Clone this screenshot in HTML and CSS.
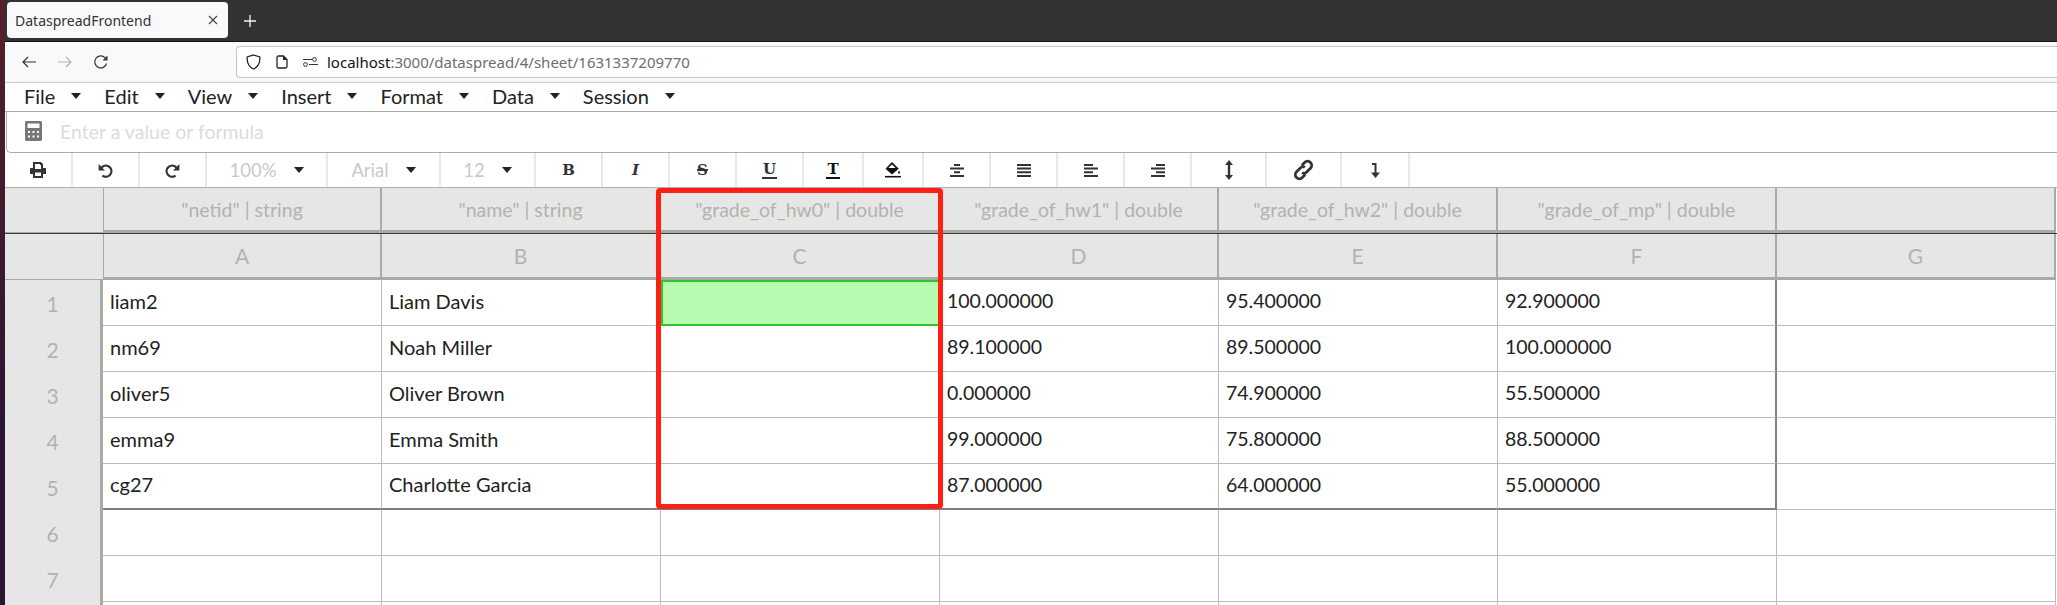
FILE: index.html
```html
<!DOCTYPE html>
<html lang="en">
<head>
    <meta charset="utf-8">
    <title>DataspreadFrontend</title>
    <link rel="stylesheet" href="styles.css">
</head>
<body>
<div class="desktop-edge"></div>
<div class="browser">
    <div class="tabbar">
        <div class="tab">
            <span class="tab-title">DataspreadFrontend</span>
            <svg class="tab-close" width="10" height="10" viewBox="0 0 10 10"><path d="M1 1L9 9M9 1L1 9" stroke="#444" stroke-width="1.1"/></svg>
        </div>
        <svg class="tab-new" width="12" height="12" viewBox="0 0 12 12"><path d="M6 0V12M0 6H12" stroke="#f4f4f4" stroke-width="1.3"/></svg>
    </div>

    <div class="navbar">
        <div class="nav-buttons">
            <svg width="16" height="14" viewBox="0 0 16 14"><path d="M15 7H2M7 2L2 7L7 12" fill="none" stroke="#333" stroke-width="1.2"/></svg>
            <svg width="16" height="14" viewBox="0 0 16 14"><path d="M1 7H14M9 2L14 7L9 12" fill="none" stroke="#b3b3b3" stroke-width="1.2"/></svg>
            <svg width="16" height="16" viewBox="0 0 16 16"><path d="M13.6 9.5A6 6 0 1 1 12 3.6L14 5.6" fill="none" stroke="#333" stroke-width="1.2"/><path d="M14.5 1.5V6.5H9.5Z" fill="#333"/></svg>
        </div>
        <div class="urlbar">
            <svg class="url-shield" width="15" height="16" viewBox="0 0 15 16"><path d="M7.5 1L13.8 3C14.2 8.5 12 13 7.5 15C3 13 .8 8.5 1.2 3Z" fill="none" stroke="#222" stroke-width="1.3"/></svg>
            <svg class="url-doc" width="12" height="14" viewBox="0 0 12 14"><path d="M2.5 1H7.5L11 4.5V11.5C11 12.4 10.4 13 9.5 13H2.5C1.6 13 1 12.4 1 11.5V2.5C1 1.6 1.6 1 2.5 1Z" fill="none" stroke="#222" stroke-width="1.3"/><path d="M7 1V5H11Z" fill="#222"/></svg>
            <svg class="url-perm" width="15" height="10" viewBox="0 0 15 10"><path d="M0 2.5H9M6 7.5H15" stroke="#333" stroke-width="1"/><circle cx="11.5" cy="2.5" r="1.9" fill="#f9f9fb" stroke="#333"/><circle cx="2.5" cy="7.5" r="1.9" fill="#f9f9fb" stroke="#333"/></svg>
            <span class="url-text"><span class="url-host">localhost</span>:3000/dataspread/4/sheet/1631337209770</span>
        </div>
    </div>

    <div class="menubar">
        <div class="menu-item">File<i class="caret"></i></div>
        <div class="menu-item">Edit<i class="caret"></i></div>
        <div class="menu-item">View<i class="caret"></i></div>
        <div class="menu-item">Insert<i class="caret"></i></div>
        <div class="menu-item">Format<i class="caret"></i></div>
        <div class="menu-item">Data<i class="caret"></i></div>
        <div class="menu-item">Session<i class="caret"></i></div>
    </div>

    <div class="formula">
        <svg width="17" height="20" viewBox="0 0 17 20"><path fill-rule="evenodd" fill="#777" d="M1.5 0H15.5C16.3 0 17 .7 17 1.5V18.5C17 19.3 16.3 20 15.5 20H1.5C.7 20 0 19.3 0 18.5V1.5C0 .7 .7 0 1.5 0ZM2.5 2.5V7H14.5V2.5ZM3 10V12H5V10ZM7.5 10V12H9.5V10ZM12 10V12H14V10ZM3 14.5V16.5H5V14.5ZM7.5 14.5V16.5H9.5V14.5ZM12 14.5V16.5H14V14.5Z"/></svg>
        <span class="formula-hint">Enter a value or formula</span>
    </div>

    <div class="toolbar">
        <div class="tb first"><svg width="16" height="16" viewBox="0 0 16 16"><path fill="#333" d="M3 0H11L13 2V6H15C15.6 6 16 6.4 16 7V12H13V16H3V12H0V7C0 6.4 .4 6 1 6H3ZM5 2V7H11V3H10V2ZM5 10.5V14H11V10.5Z" fill-rule="evenodd"/></svg></div>
        <div class="tb"><svg width="15" height="15" viewBox="0 0 15 15"><path d="M3.6 4.4A5.6 5.6 0 1 1 4.4 12.6" fill="none" stroke="#333" stroke-width="2.3"/><path d="M.6 1V7.4H7Z" fill="#333"/></svg></div>
        <div class="tb"><svg width="15" height="15" viewBox="0 0 15 15"><path d="M11.4 4.4A5.6 5.6 0 1 0 10.6 12.6" fill="none" stroke="#333" stroke-width="2.3"/><path d="M14.4 1V7.4H8Z" fill="#333"/></svg></div>
        <div class="tb tb-zoom"><span class="tb-value">100%</span><i class="caret"></i></div>
        <div class="tb tb-font"><span class="tb-value">Arial</span><i class="caret"></i></div>
        <div class="tb tb-size"><span class="tb-value">12</span><i class="caret"></i></div>
        <div class="tb"><span class="glyph">B</span></div>
        <div class="tb"><span class="glyph slant">I</span></div>
        <div class="tb"><span class="glyph strike">S</span></div>
        <div class="tb"><span class="glyph under">U</span></div>
        <div class="tb tb-narrow"><span class="glyph under black">T</span></div>
        <div class="tb tb-narrow"><svg width="16" height="16" viewBox="0 0 16 16"><path d="M7 .5L13.2 6.7L7 12L1 6.7Z" fill="#111" stroke="#111"/><path d="M7 2.5L10.6 6H3.4Z" fill="#fff"/><path d="M14 8.5C15 10 15.6 11 14 11.8C12.4 11 13 10 14 8.5Z" fill="#111"/><path d="M0 14.7H16" stroke="#111" stroke-width="1.6"/></svg></div>
        <div class="tb"><svg width="14" height="13" viewBox="0 0 14 13"><path d="M4 1H10M0 4.6H14M4 8.3H10M0 12H14" stroke="#333" stroke-width="2"/></svg></div>
        <div class="tb"><svg width="14" height="13" viewBox="0 0 14 13"><path d="M0 1H14M0 4.6H14M0 8.3H14M0 12H14" stroke="#333" stroke-width="2"/></svg></div>
        <div class="tb"><svg width="14" height="13" viewBox="0 0 14 13"><path d="M0 1H9M0 4.6H14M0 8.3H9M0 12H14" stroke="#333" stroke-width="2"/></svg></div>
        <div class="tb"><svg width="14" height="13" viewBox="0 0 14 13"><path d="M5 1H14M0 4.6H14M5 8.3H14M0 12H14" stroke="#333" stroke-width="2"/></svg></div>
        <div class="tb tb-wide"><svg width="8" height="20" viewBox="0 0 8 20"><path d="M4 3V17" stroke="#333" stroke-width="2.4"/><path d="M4 0L8 5H0ZM4 20L8 15H0Z" fill="#333"/></svg></div>
        <div class="tb tb-wide"><svg width="21" height="22" viewBox="0 0 18 19"><path d="M7.5 5.5L10 3C11.3 1.7 13.5 1.5 15 3C16.5 4.5 16.3 6.7 15 8L11.5 11.5C10.6 12.4 9 12.6 7.8 11.8M10.5 13.5L8 16C6.7 17.3 4.5 17.5 3 16C1.5 14.5 1.7 12.3 3 11L6.5 7.5C7.4 6.6 9 6.4 10.2 7.2" fill="none" stroke="#333" stroke-width="2.4"/></svg></div>
        <div class="tb tb-last"><svg width="9" height="15" viewBox="0 0 9 15"><path d="M1 1H4.5V11" fill="none" stroke="#333" stroke-width="2"/><path d="M4.5 15L9 9.5H0Z" fill="#333"/></svg></div>
    </div>

    <div class="sheet">
        <div class="head-row schema-row">
            <div class="corner"></div>
            <div class="head-cell">"netid" | string</div>
            <div class="head-cell">"name" | string</div>
            <div class="head-cell">"grade_of_hw0" | double</div>
            <div class="head-cell">"grade_of_hw1" | double</div>
            <div class="head-cell">"grade_of_hw2" | double</div>
            <div class="head-cell">"grade_of_mp" | double</div>
            <div class="head-cell"></div>
        </div>
        <div class="head-row letter-row">
            <div class="corner"></div>
            <div class="head-cell">A</div>
            <div class="head-cell">B</div>
            <div class="head-cell">C</div>
            <div class="head-cell">D</div>
            <div class="head-cell">E</div>
            <div class="head-cell">F</div>
            <div class="head-cell">G</div>
        </div>

        <div class="row filled">
            <div class="row-num">1</div>
            <div class="cell">liam2</div>
            <div class="cell">Liam Davis</div>
            <div class="cell selected"></div>
            <div class="cell num">100.000000</div>
            <div class="cell num">95.400000</div>
            <div class="cell num edge">92.900000</div>
            <div class="cell"></div>
        </div>
        <div class="row filled">
            <div class="row-num">2</div>
            <div class="cell">nm69</div>
            <div class="cell">Noah Miller</div>
            <div class="cell"></div>
            <div class="cell num">89.100000</div>
            <div class="cell num">89.500000</div>
            <div class="cell num edge">100.000000</div>
            <div class="cell"></div>
        </div>
        <div class="row filled">
            <div class="row-num">3</div>
            <div class="cell">oliver5</div>
            <div class="cell">Oliver Brown</div>
            <div class="cell"></div>
            <div class="cell num">0.000000</div>
            <div class="cell num">74.900000</div>
            <div class="cell num edge">55.500000</div>
            <div class="cell"></div>
        </div>
        <div class="row filled">
            <div class="row-num">4</div>
            <div class="cell">emma9</div>
            <div class="cell">Emma Smith</div>
            <div class="cell"></div>
            <div class="cell num">99.000000</div>
            <div class="cell num">75.800000</div>
            <div class="cell num edge">88.500000</div>
            <div class="cell"></div>
        </div>
        <div class="row filled last">
            <div class="row-num">5</div>
            <div class="cell">cg27</div>
            <div class="cell">Charlotte Garcia</div>
            <div class="cell"></div>
            <div class="cell num">87.000000</div>
            <div class="cell num">64.000000</div>
            <div class="cell num edge">55.000000</div>
            <div class="cell"></div>
        </div>
        <div class="row">
            <div class="row-num">6</div>
            <div class="cell"></div><div class="cell"></div><div class="cell"></div><div class="cell"></div><div class="cell"></div><div class="cell"></div><div class="cell"></div>
        </div>
        <div class="row">
            <div class="row-num">7</div>
            <div class="cell"></div><div class="cell"></div><div class="cell"></div><div class="cell"></div><div class="cell"></div><div class="cell"></div><div class="cell"></div>
        </div>
        <div class="row">
            <div class="row-num"></div>
            <div class="cell"></div><div class="cell"></div><div class="cell"></div><div class="cell"></div><div class="cell"></div><div class="cell"></div><div class="cell"></div>
        </div>

        <!-- red annotation around column C -->
        <div class="highlight"></div>
    </div>
</div>
</body>
</html>
```

FILE: styles.css
```css
* {
    box-sizing: border-box;
}

html, body {
    height: 100%;
    overflow: hidden;
}

body {
    margin: 0;
    display: flex;
    background-color: #fff;
    font-family: "Lato", "Liberation Sans", sans-serif;
}

.desktop-edge {
    flex: 0 0 5px;
    background: linear-gradient(to bottom, #56202a, #2c1433 70%);
}

.browser {
    flex: 1;
    min-width: 0;
    display: flex;
    flex-direction: column;
}

/* browser chrome */
.tabbar {
    height: 42px;
    flex: none;
    display: flex;
    align-items: flex-start;
    padding: 2px 0 0 2px;
    background-color: #333132;
    border-bottom: 1px solid #111;
}

.tab {
    width: 221px;
    height: 36px;
    display: flex;
    align-items: center;
    justify-content: space-between;
    padding: 0 10px 0 8px;
    background-color: #f9f9fb;
    border-radius: 4px;
    font-family: "Noto Sans", sans-serif;
    font-size: 14px;
    color: #333;
}

.tab-new {
    margin: 13px 0 0 16px;
}

.navbar {
    height: 41px;
    flex: none;
    display: flex;
    padding-top: 4px;
    background-color: #f9f9fb;
    border-bottom: 1px solid #ccc;
}

.nav-buttons {
    width: 231px;
    height: 31px;
    display: flex;
    align-items: center;
    gap: 20px;
    padding-left: 16px;
}

.urlbar {
    flex: 1;
    height: 32px;
    display: flex;
    align-items: center;
    padding-left: 9px;
    background-color: #fff;
    border: 1px solid #c4c4c4;
    border-right: none;
    border-radius: 4px 0 0 4px;
}

.url-doc {
    margin-left: 15px;
}

.url-perm {
    margin-left: 15px;
}

.url-text {
    margin-left: 9px;
    font-family: "Noto Sans", sans-serif;
    font-size: 15px;
    color: #6d6d6d;
}

.url-host {
    color: #111;
}

.menubar {
    height: 29px;
    flex: none;
    display: flex;
    align-items: center;
    padding: 0 0 2px 19px;
    border-bottom: 1px solid #aaa;
    font-size: 20px;
    color: #222;
}

.menu-item {
    display: flex;
    align-items: center;
    gap: 16px;
    margin-right: 23px;
}

.caret {
    width: 0;
    height: 0;
    border-left: 5px solid transparent;
    border-right: 5px solid transparent;
    border-top: 6px solid #222;
}

.formula {
    height: 41px;
    flex: none;
    display: flex;
    align-items: center;
    gap: 18px;
    margin-left: 1px;
    padding: 0 0 2px 18px;
    border: 1px solid #aaa;
    border-top: none;
    border-right: none;
    border-radius: 0 0 0 5px;
}

.formula-hint {
    font-size: 19.5px;
    color: #dcdcdc;
}

/* toolbar */
.toolbar {
    height: 35px;
    flex: none;
    display: flex;
    border-bottom: 1px solid #b0b0ac;
}

.tb {
    width: 67px;
    display: flex;
    align-items: center;
    justify-content: center;
    border-right: 2px solid #e8e8e8;
}

.tb.first {
    width: 68px;
}

.tb-zoom {
    width: 121px;
    gap: 17px;
}

.tb-font {
    width: 113px;
    gap: 17px;
}

.tb-size {
    width: 95px;
    gap: 17px;
}

.tb-narrow {
    width: 60px;
}

.tb-wide {
    width: 75px;
}

.tb-last {
    width: 68px;
}

.tb-value {
    font-size: 18.5px;
    color: #c9c9c9;
}

.glyph {
    font-family: "DejaVu Serif", serif;
    font-weight: bold;
    font-size: 15px;
    line-height: 16px;
    color: #333;
}

.slant {
    font-style: italic;
}

.strike {
    text-decoration: line-through;
    text-decoration-thickness: 1.5px;
}

.under {
    border-bottom: 2px solid #333;
    padding: 0 1px;
}

.under.black {
    color: #111;
    border-color: #111;
}

/* sheet */
.sheet {
    position: relative;
    flex: 1;
    min-height: 0;
    overflow: hidden;
}

.head-row,
.row {
    display: flex;
}

.schema-row {
    height: 46px;
    border-bottom: 1px solid #3a3a38;
}

.letter-row {
    height: 46px;
}

.corner {
    width: 98px;
    flex: none;
    background-color: #e6e6e6;
    border-bottom: 1px solid #a9a9a5;
}

.head-cell {
    width: 279px;
    flex: none;
    display: flex;
    align-items: center;
    justify-content: center;
    background-color: #e6e6e6;
    border-right: 2px solid #a9a9a5;
    border-bottom: 3px solid #a9a9a5;
    color: #b5b2ac;
    font-size: 19.5px;
}

.corner + .head-cell {
    border-left: 1px solid #a9a9a5;
}

.letter-row .head-cell {
    font-size: 21px;
}

.row {
    height: 46px;
    flex: none;
}

.row-num {
    width: 98px;
    flex: none;
    display: flex;
    align-items: center;
    justify-content: center;
    background-color: #e6e6e6;
    border-right: 3px solid #a9a9a5;
    color: #b5b2ac;
    font-size: 21px;
}

.cell {
    width: 279px;
    flex: none;
    display: flex;
    align-items: center;
    padding: 0 0 4px 7px;
    border-right: 1px solid #bbb;
    border-bottom: 1px solid #bbb;
    color: #222;
    font-size: 20px;
}

.cell.num {
    font-size: 19.5px;
}

.cell.edge {
    border-right: 2px solid #808080;
}

.last .cell:not(:last-child) {
    border-bottom: 2px solid #808080;
}

.cell.selected {
    background-color: #b6fbb0;
    border: 2px solid #2ec52e;
}

.highlight {
    position: absolute;
    top: 0;
    left: 651px;
    width: 287px;
    height: 321px;
    border: 5px solid #ff2015;
    border-radius: 4px;
}
```
